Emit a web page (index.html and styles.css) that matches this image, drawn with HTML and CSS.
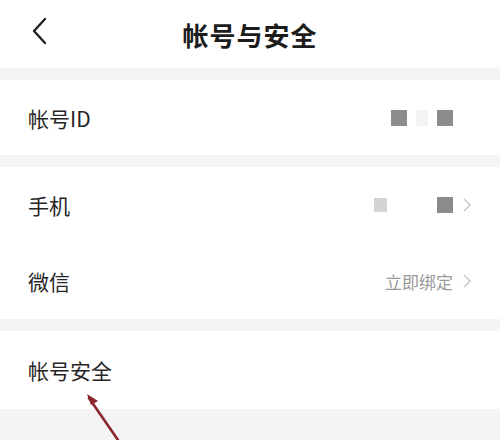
FILE: index.html
```html
<!DOCTYPE html>
<html>
<head>
<meta charset="utf-8">
<link rel="stylesheet" href="styles.css">
</head>
<body>
<div class="page">
  <header class="nav">
    <svg class="back" width="16" height="28" viewBox="0 0 16 28"><path d="M14 2 L3 14 L14 26" fill="none" stroke="#222" stroke-width="2.4" stroke-linecap="round" stroke-linejoin="round"/></svg>
    <h1 class="title">帐号与安全</h1>
  </header>

  <section class="group">
    <div class="row">
      <span class="label">帐号ID</span>
      <span class="value">
        <i class="blk dark"></i><i class="blk faint"></i><i class="blk dark"></i>
      </span>
    </div>
  </section>

  <section class="group">
    <div class="row">
      <span class="label">手机</span>
      <span class="value">
        <i class="blk light"></i><i class="gap"></i><i class="blk dark"></i>
        <svg class="chev" width="8" height="14" viewBox="0 0 8 14"><path d="M1 1 L7 7 L1 13" fill="none" stroke="#c4c4c4" stroke-width="1.4"/></svg>
      </span>
    </div>
    <div class="row">
      <span class="label">微信</span>
      <span class="value">
        <span class="hint">立即绑定</span>
        <svg class="chev" width="8" height="14" viewBox="0 0 8 14"><path d="M1 1 L7 7 L1 13" fill="none" stroke="#c4c4c4" stroke-width="1.4"/></svg>
      </span>
    </div>
  </section>

  <section class="group last">
    <div class="row">
      <span class="label">帐号安全</span>
    </div>
  </section>

  <svg class="arrow" width="60" height="60" viewBox="0 0 60 60">
    <path d="M38 58 L9 16" stroke="#8a2630" stroke-width="2.6" stroke-linecap="round"/>
    <path d="M7 12 L18 19 L11 23 Z" fill="#8a2630"/>
  </svg>
</div>
</body>
</html>
```

FILE: styles.css
```css
* { box-sizing: border-box; }
html, body { margin: 0; padding: 0; }
body {
  background: #f4f4f4;
  font-family: "Noto Sans CJK SC", "Noto Sans", sans-serif;
  color: #222;
  width: 500px;
  height: 440px;
  overflow: hidden;
}
.page { position: relative; height: 440px; }
.nav {
  height: 68px;
  background: #fff;
  display: flex;
  align-items: center;
  justify-content: center;
  position: relative;
  margin-bottom: 12px;
}
.back { position: absolute; left: 31px; top: 17px; }
.title {
  margin: 0;
  font-size: 26px;
  font-weight: 700;
  letter-spacing: 1px;
  color: #1c1c1c;
}
.group {
  background: #fff;
  margin-bottom: 12px;
}
.row {
  height: 76px;
  display: flex;
  align-items: center;
  justify-content: space-between;
  padding: 0 29px 0 28px;
}
.group:first-of-type .row { height: 75px; }
.group.last .row { height: 78px; }
.label { font-size: 21px; color: #262626; }
.value { display: flex; align-items: center; }
.blk { display: block; width: 16px; height: 16px; }
.blk.dark { background: #8c8c8c; }
.blk.faint { background: #f3f3f3; width: 12px; margin: 0 9px; }
.blk.light { background: #d4d4d4; width: 13px; height: 14px; }
.gap { display: block; width: 50px; }
.chev { margin-left: 10px; }
.hint { font-size: 17px; color: #9a9a9a; }
.group:first-of-type .value { margin-right: 18px; }
.arrow { position: absolute; left: 80px; top: 382px; }
```
